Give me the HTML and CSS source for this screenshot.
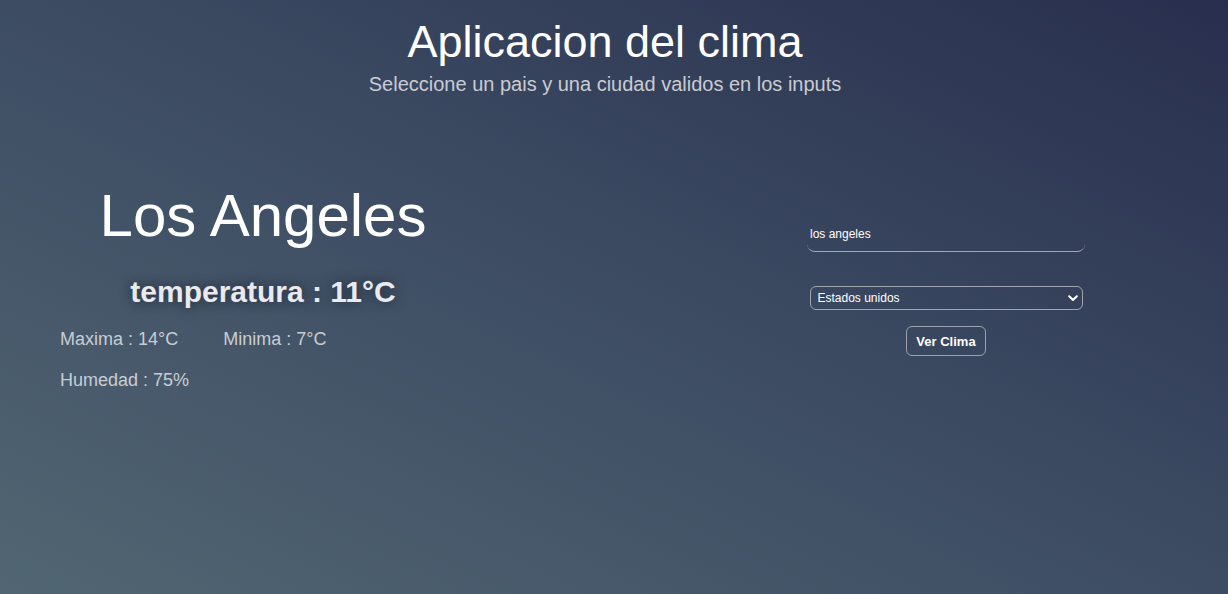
FILE: index.html
```html
<!DOCTYPE html>
<html lang="es">
<head>
<meta charset="utf-8">
<title>Aplicacion del clima</title>
<link rel="stylesheet" href="styles.css">
</head>
<body>
<header class="header">
  <h1 class="title">Aplicacion del clima</h1>
  <p class="subtitle">Seleccione un pais y una ciudad validos en los inputs</p>
</header>
<main class="main">
  <section class="weather">
    <h2 class="city">Los Angeles</h2>
    <p class="temp">temperatura : 11°C</p>
    <div class="minmax">
      <span class="stat">Maxima : 14°C</span>
      <span class="stat">Minima : 7°C</span>
    </div>
    <p class="stat humidity">Humedad : 75%</p>
  </section>
  <form class="form">
    <input class="city-input" type="text" value="los angeles">
    <div class="select-wrap">
      <select class="country-select">
        <option>Estados unidos</option>
      </select>
      <svg class="chevron" width="10" height="7" viewBox="0 0 10 7"><path d="M1.2 1.3 L5 5 L8.8 1.3" fill="none" stroke="#fff" stroke-width="2" stroke-linecap="round" stroke-linejoin="round"/></svg>
    </div>
    <button class="btn" type="button">Ver Clima</button>
  </form>
</main>
</body>
</html>
```
FILE: styles.css
```css
* { box-sizing: border-box; }
html, body { height: 100%; }
body {
  margin: 0;
  font-family: "Liberation Sans", Arial, sans-serif;
  background: linear-gradient(to top right, #516672 0%, #3d4c63 50%, #282f4e 100%);
  color: #fff;
  overflow: hidden;
}
.header {
  text-align: center;
  padding-top: 16px;
  padding-right: 18px;
}
.title {
  margin: 0;
  font-size: 45px;
  font-weight: 400;
  line-height: 52px;
  color: #fff;
}
.subtitle {
  margin: 5px 0 0;
  font-size: 20px;
  line-height: 23px;
  color: #c9ccd3;
}
.main {
  display: flex;
  align-items: flex-start;
  padding-left: 60px;
  margin-top: 85px;
}
.weather {
  width: 406px;
}
.city {
  margin: 0;
  text-align: center;
  font-size: 60px;
  font-weight: 400;
  line-height: 69px;
  color: #fff;
}
.temp {
  margin: 24px 0 0;
  text-align: center;
  font-size: 30px;
  font-weight: 700;
  line-height: 35px;
  color: #e9eaee;
  text-shadow: 0 0 12px rgba(20, 25, 40, 0.75);
}
.minmax {
  display: flex;
  gap: 45px;
  margin-top: 20px;
}
.stat {
  font-size: 18px;
  line-height: 21px;
  color: #c8cdd4;
}
.humidity {
  margin: 20px 0 0;
}
.form {
  margin-left: 341px;
  width: 278px;
  display: flex;
  flex-direction: column;
  align-items: center;
  padding-top: 41px;
}
.city-input {
  width: 278px;
  height: 30px;
  background: transparent;
  border: none;
  border-bottom: 1px solid #a3a7b0;
  border-radius: 0 0 8px 8px;
  color: #fff;
  font-family: "Liberation Sans", Arial, sans-serif;
  font-size: 12px;
  padding: 0 3px 6px;
  outline: none;
}
.select-wrap {
  position: relative;
  margin-top: 34px;
  width: 273px;
}
.country-select {
  appearance: none;
  -webkit-appearance: none;
  display: block;
  width: 273px;
  height: 24px;
  background: transparent;
  border: 1px solid #a0a5b0;
  border-radius: 6px;
  color: #fff;
  font-family: "Liberation Sans", Arial, sans-serif;
  font-size: 12px;
  padding: 0 7px;
}
.chevron {
  position: absolute;
  right: 5px;
  top: 9px;
}
.btn {
  margin-top: 16px;
  width: 80px;
  height: 30px;
  background: transparent;
  border: 1px solid #9ca1ad;
  border-radius: 6px;
  color: #fff;
  font-family: "Liberation Sans", Arial, sans-serif;
  font-size: 13px;
  font-weight: 700;
  padding: 0;
}
```
